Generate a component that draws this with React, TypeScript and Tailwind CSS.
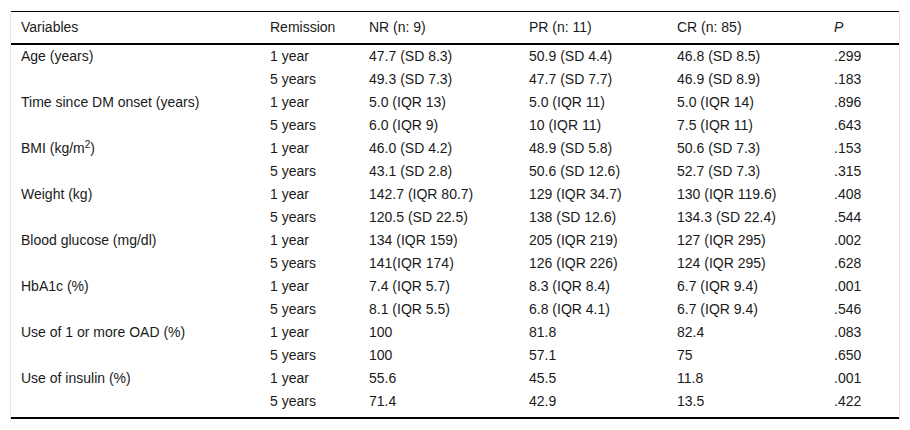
import React from 'react';

type Row = {
  label?: React.ReactNode;
  period: string;
  nr: string;
  pr: string;
  cr: string;
  p: string;
};

const rows: Row[] = [
  { label: 'Age (years)', period: '1 year', nr: '47.7 (SD 8.3)', pr: '50.9 (SD 4.4)', cr: '46.8 (SD 8.5)', p: '.299' },
  { period: '5 years', nr: '49.3 (SD 7.3)', pr: '47.7 (SD 7.7)', cr: '46.9 (SD 8.9)', p: '.183' },
  { label: 'Time since DM onset (years)', period: '1 year', nr: '5.0 (IQR 13)', pr: '5.0 (IQR 11)', cr: '5.0 (IQR 14)', p: '.896' },
  { period: '5 years', nr: '6.0 (IQR 9)', pr: '10 (IQR 11)', cr: '7.5 (IQR 11)', p: '.643' },
  {
    label: (
      <>
        BMI (kg/m<sup className="text-[10px] leading-none">2</sup>)
      </>
    ),
    period: '1 year',
    nr: '46.0 (SD 4.2)',
    pr: '48.9 (SD 5.8)',
    cr: '50.6 (SD 7.3)',
    p: '.153',
  },
  { period: '5 years', nr: '43.1 (SD 2.8)', pr: '50.6 (SD 12.6)', cr: '52.7 (SD 7.3)', p: '.315' },
  { label: 'Weight (kg)', period: '1 year', nr: '142.7 (IQR 80.7)', pr: '129 (IQR 34.7)', cr: '130 (IQR 119.6)', p: '.408' },
  { period: '5 years', nr: '120.5 (SD 22.5)', pr: '138 (SD 12.6)', cr: '134.3 (SD 22.4)', p: '.544' },
  { label: 'Blood glucose (mg/dl)', period: '1 year', nr: '134 (IQR 159)', pr: '205 (IQR 219)', cr: '127 (IQR 295)', p: '.002' },
  { period: '5 years', nr: '141(IQR 174)', pr: '126 (IQR 226)', cr: '124 (IQR 295)', p: '.628' },
  { label: 'HbA1c (%)', period: '1 year', nr: '7.4 (IQR 5.7)', pr: '8.3 (IQR 8.4)', cr: '6.7 (IQR 9.4)', p: '.001' },
  { period: '5 years', nr: '8.1 (IQR 5.5)', pr: '6.8 (IQR 4.1)', cr: '6.7 (IQR 9.4)', p: '.546' },
  { label: 'Use of 1 or more OAD (%)', period: '1 year', nr: '100', pr: '81.8', cr: '82.4', p: '.083' },
  { period: '5 years', nr: '100', pr: '57.1', cr: '75', p: '.650' },
  { label: 'Use of insulin (%)', period: '1 year', nr: '55.6', pr: '45.5', cr: '11.8', p: '.001' },
  { period: '5 years', nr: '71.4', pr: '42.9', cr: '13.5', p: '.422' },
];

export default function App() {
  const cell = (i: number) =>
    i === rows.length - 1 ? 'px-[10px] pb-[4px]' : 'px-[10px]';

  return (
    <div className="h-[430px] w-[910px] bg-white px-[10px] pt-[11px] font-['Liberation_Sans',Arial,sans-serif] text-[14px] text-[#1a1a1a]">
      <div className="w-[890px] border-x border-[#e6e6e6]">
        <table className="w-full table-fixed border-collapse">
          <colgroup>
            <col className="w-[249px]" />
            <col className="w-[99px]" />
            <col className="w-[160px]" />
            <col className="w-[148px]" />
            <col className="w-[157px]" />
            <col />
          </colgroup>
          <thead>
            <tr className="border-t border-b-2 border-t-black border-b-black">
              <th className="h-[32px] px-[10px] text-left font-normal">Variables</th>
              <th className="px-[10px] text-left font-normal">Remission</th>
              <th className="px-[10px] text-left font-normal">NR (n: 9)</th>
              <th className="px-[10px] text-left font-normal">PR (n: 11)</th>
              <th className="px-[10px] text-left font-normal">CR (n: 85)</th>
              <th className="px-[10px] text-left font-normal italic">P</th>
            </tr>
          </thead>
          <tbody className="border-b-2 border-black">
            {rows.map((r, i) => (
              <tr key={i} className="leading-[23px]">
                <td className={cell(i)}>{r.label}</td>
                <td className={cell(i)}>{r.period}</td>
                <td className={cell(i)}>{r.nr}</td>
                <td className={cell(i)}>{r.pr}</td>
                <td className={cell(i)}>{r.cr}</td>
                <td className={cell(i)}>{r.p}</td>
              </tr>
            ))}
          </tbody>
        </table>
      </div>
    </div>
  );
}
